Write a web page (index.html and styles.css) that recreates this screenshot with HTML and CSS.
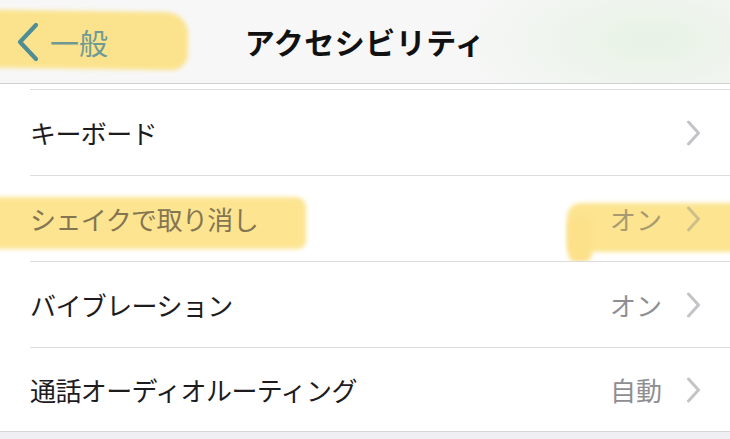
FILE: index.html
```html
<!DOCTYPE html>
<html lang="ja">
<head>
<meta charset="UTF-8" />
<meta name="viewport" content="width=device-width, initial-scale=1" />
<title>アクセシビリティ</title>
<link rel="stylesheet" href="styles.css">
</head>
<body>

<header class="nav">
  <div class="marker marker-back"></div>
  <a class="back" href="#">
    <svg class="back-icon" width="24" height="40" viewBox="0 0 24 40">
      <path d="M20 3 L4 20 L20 37" fill="none" stroke="currentColor" stroke-width="4.2" stroke-linecap="round" stroke-linejoin="round"/>
    </svg>
    <span>一般</span>
  </a>
  <h1 class="title">アクセシビリティ</h1>
  <div></div>
</header>

<div class="list">
  <div class="cell cut"><div class="cell-body"></div></div>

  <div class="cell">
    <div class="cell-body">
      <span class="label">キーボード</span>
      <span class="detail"></span>
      <svg class="chev" width="15" height="26" viewBox="0 0 15 26"><path d="M2.5 2 L12.5 13 L2.5 24" /></svg>
    </div>
  </div>

  <div class="cell marked">
    <div class="marker marker-row"></div>
    <div class="marker marker-value"></div>
    <div class="marker marker-drip"></div>
    <div class="cell-body">
      <span class="label">シェイクで取り消し</span>
      <span class="detail">オン</span>
      <svg class="chev" width="15" height="26" viewBox="0 0 15 26"><path d="M2.5 2 L12.5 13 L2.5 24" /></svg>
    </div>
  </div>

  <div class="cell">
    <div class="cell-body">
      <span class="label">バイブレーション</span>
      <span class="detail">オン</span>
      <svg class="chev" width="15" height="26" viewBox="0 0 15 26"><path d="M2.5 2 L12.5 13 L2.5 24" /></svg>
    </div>
  </div>

  <div class="cell last">
    <div class="cell-body">
      <span class="label">通話オーディオルーティング</span>
      <span class="detail">自動</span>
      <svg class="chev" width="15" height="26" viewBox="0 0 15 26"><path d="M2.5 2 L12.5 13 L2.5 24" /></svg>
    </div>
  </div>
</div>

</body>
</html>
```

FILE: styles.css
```css
body {
  margin: 0;
  font-family: "Noto Sans CJK JP", "Noto Sans", sans-serif;
  background: #efeff4;
  color: #1c1c1e;
  overflow: hidden;
}

/* ナビゲーションバー */
.nav {
  position: relative;
  height: 83px;
  display: grid;
  grid-template-columns: 1fr auto 1fr;
  align-items: center;
  background:
    radial-gradient(ellipse 200px 90px at 650px 40px, rgb(225 240 222 / 0.7), rgb(247 247 247 / 0) 100%),
    #f7f7f7;
  border-bottom: 1px solid #cfcfd2;
}
.back {
  position: relative;
  z-index: 1;
  display: flex;
  align-items: center;
  gap: 10px;
  padding-left: 16px;
  color: #6f9a94;
  text-decoration: none;
  font-size: 29px;
}
.back-icon {
  color: #4f8d96;
}
.title {
  margin: 0 0 2px;
  font-size: 30px;
  font-weight: 700;
  letter-spacing: 0.5px;
  color: #111;
}

/* 蛍光ペン */
.marker {
  position: absolute;
  background: #fbe38d;
  filter: blur(2px);
  z-index: 0;
}
.marker-back {
  left: -10px;
  top: 11px;
  width: 198px;
  height: 58px;
  border-radius: 4px 22px 16px 3px;
  transform: rotate(0.8deg);
}
.marker-row {
  left: -10px;
  top: 21px;
  width: 316px;
  height: 52px;
  border-radius: 3px 10px 8px 3px;
  background: #fce491;
}
.marker-value {
  left: 567px;
  top: 27px;
  width: 180px;
  height: 49px;
  border-radius: 14px 0 0 6px;
  background: #fce491;
}
.marker-drip {
  left: 568px;
  top: 40px;
  width: 24px;
  height: 46px;
  border-radius: 10px 10px 8px 8px;
  background: #fde08a;
}

/* リスト */
.list {
  background: #fff;
}
.cell {
  position: relative;
  padding-left: 30px;
  background: #fff;
}
.cell-body {
  position: relative;
  z-index: 1;
  height: 85px;
  display: flex;
  align-items: center;
  padding-right: 29px;
  border-bottom: 1px solid #dcdcdf;
}
.cell.cut .cell-body {
  height: 5px;
}
.cell.last {
  padding-left: 0;
}
.cell.last .cell-body {
  padding-left: 30px;
  height: 83px;
  border-bottom-color: #d6d6da;
}
.label {
  flex: 1;
  font-size: 26px;
  letter-spacing: -0.6px;
}
.detail {
  font-size: 26px;
  color: #8e8e93;
  margin-right: 24px;
}
.chev path {
  fill: none;
  stroke: #c4c4c8;
  stroke-width: 3;
  stroke-linecap: round;
  stroke-linejoin: round;
}
.marked .label {
  color: #847550;
}
.marked .detail {
  color: #a79a6e;
}
.marked .chev path {
  stroke: #cdbf8a;
}
```
